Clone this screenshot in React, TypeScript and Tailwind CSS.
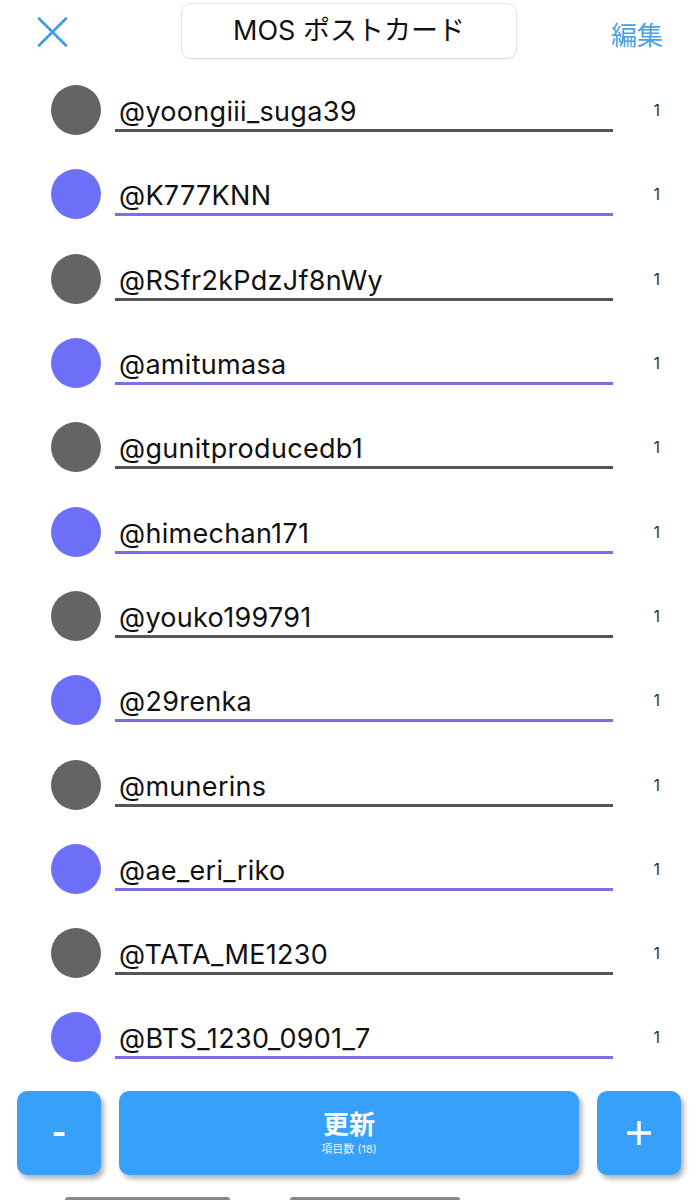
import React from 'react';

type Entry = { name: string; count: number };

const ENTRIES: Entry[] = [
  { name: '@yoongiii_suga39', count: 1 },
  { name: '@K777KNN', count: 1 },
  { name: '@RSfr2kPdzJf8nWy', count: 1 },
  { name: '@amitumasa', count: 1 },
  { name: '@gunitproducedb1', count: 1 },
  { name: '@himechan171', count: 1 },
  { name: '@youko199791', count: 1 },
  { name: '@29renka', count: 1 },
  { name: '@munerins', count: 1 },
  { name: '@ae_eri_riko', count: 1 },
  { name: '@TATA_ME1230', count: 1 },
  { name: '@BTS_1230_0901_7', count: 1 },
];

const font = { fontFamily: 'Inter, "Noto Sans CJK JP", sans-serif' };

const Row: React.FC<{ entry: Entry; index: number }> = ({ entry, index }) => {
  const purple = index % 2 === 1;
  return (
    <div className="flex h-[84.3px] items-center pl-[51px] pr-[38px]">
      <div className={`size-[50px] shrink-0 rounded-full ${purple ? 'bg-[#6e6ff9]' : 'bg-[#646464]'}`} />
      <div className="ml-[14px] flex h-full w-[498px] flex-col justify-center">
        <div className="mt-[8px] pl-[4px] text-[27px] leading-[32px] tracking-[0.3px] text-[#111]">{entry.name}</div>
        <div className={`mt-[1px] h-[3px] w-full ${purple ? 'bg-[#7a6fe3]' : 'bg-[#555]'}`} />
      </div>
      <div className="ml-auto text-[16px] text-[#333]">{entry.count}</div>
    </div>
  );
};

const App: React.FC = () => {
  return (
    <div className="flex h-[1200px] w-[698px] flex-col overflow-hidden bg-white" style={font}>
      {/* Header */}
      <header className="flex h-[68px] shrink-0 items-start">
        <div className="flex w-[181px] items-center pl-[37px] pt-[17px]">
          <svg width="31" height="30" viewBox="0 0 31 30" fill="none">
            <path d="M2 1.5 L29 28.5 M29 1.5 L2 28.5" stroke="#3e9de2" strokeWidth="2.6" strokeLinecap="round" />
          </svg>
        </div>
        <div className="mt-[3px] flex h-[56px] w-[336px] items-center justify-center rounded-[10px] border border-[#e2e2e2] text-[27px] text-[#111] shadow-[0_1px_2px_rgba(0,0,0,0.06)]">
          MOS ポストカード
        </div>
        <div className="flex flex-1 justify-end pr-[35px] pt-[16px] text-[26px] text-[#4aa2e0]">編集</div>
      </header>

      {/* List */}
      <main className="flex flex-col">
        {ENTRIES.map((e, i) => (
          <Row key={e.name} entry={e} index={i} />
        ))}
      </main>

      {/* Bottom bar */}
      <footer className="mt-[11px] flex gap-[18px] px-[17px]">
        <button className="flex h-[84px] w-[84px] items-center justify-center rounded-[10px] bg-[#37a0fa] text-[32px] font-bold text-white shadow-[3px_4px_5px_rgba(0,0,0,0.3)]">
          -
        </button>
        <button className="flex h-[84px] flex-1 flex-col items-center justify-center rounded-[10px] bg-[#37a0fa] text-white shadow-[3px_4px_5px_rgba(0,0,0,0.3)]">
          <span className="text-[26px] font-bold leading-[30px]">更新</span>
          <span className="mt-[3px] text-[11px] leading-[12px] text-[#e6f2ff]">項目数 (18)</span>
        </button>
        <button className="flex h-[84px] w-[84px] items-center justify-center rounded-[10px] bg-[#37a0fa] text-white shadow-[3px_4px_5px_rgba(0,0,0,0.3)]">
          <svg width="26" height="26" viewBox="0 0 26 26">
            <path d="M13 1 V25 M1 13 H25" stroke="white" strokeWidth="3.5" />
          </svg>
        </button>
      </footer>

      <div className="mt-auto flex h-[3px] gap-[60px] pl-[65px]">
        <div className="h-full w-[165px] rounded-t bg-[#888]" />
        <div className="h-full w-[170px] rounded-t bg-[#888]" />
      </div>
    </div>
  );
};

export default App;
